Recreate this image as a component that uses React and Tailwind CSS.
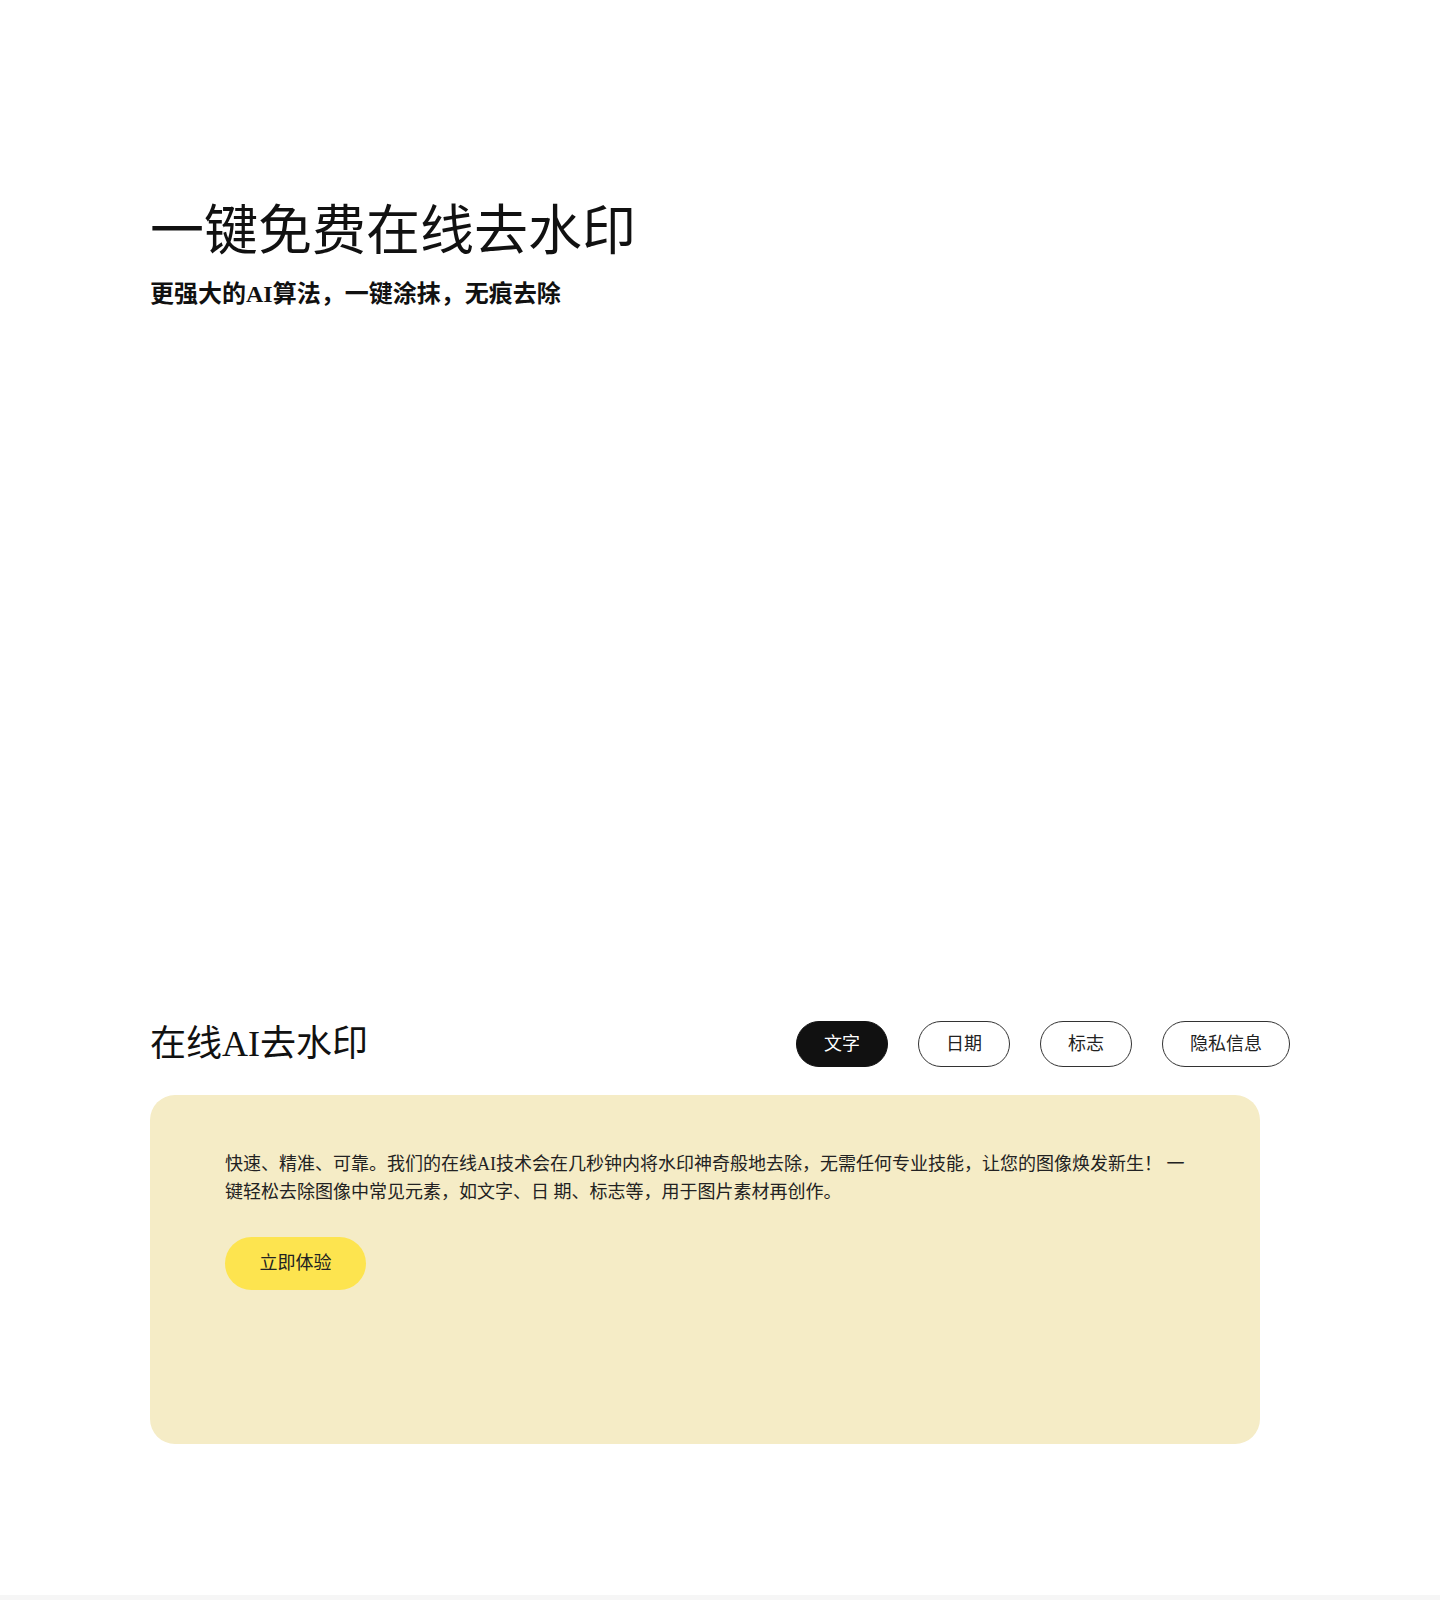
import React, {useState} from 'react';

const tags = ['文字', '日期', '标志', '隐私信息'];

const fontStack = {fontFamily: '"Liberation Serif", "Noto Sans CJK SC", serif'};

const App = () => {
  const [active, setActive] = useState('文字');

  return (
    <div style={fontStack} className="w-full h-[1600px] overflow-hidden bg-white text-[#1a1a1a] flex flex-col">
      <div className="w-[1140px] mx-auto">
        {/* hero */}
        <section className="pt-[200px]">
          <h1 className="text-[54px] leading-[65px] font-normal text-[#111]">一键免费在线去水印</h1>
          <p className="mt-[13px] text-[24px] leading-[32px] font-bold text-[#111]">更强大的AI算法，一键涂抹，无痕去除</p>
        </section>

        {/* tool section */}
        <section className="mt-[711px]">
          <div className="flex items-center justify-between h-[46px]">
            <h2 className="text-[36px] leading-[46px] font-normal text-[#111]">在线AI去水印</h2>
            <div className="flex gap-[30px]">
              {tags.map(tag => (
                <button
                  key={tag}
                  onClick={() => setActive(tag)}
                  className={
                    active === tag
                      ? 'h-[46px] px-[27px] rounded-full border border-[#111] bg-[#111] text-white text-[18px] leading-none'
                      : 'h-[46px] px-[27px] rounded-full border border-[#333] bg-white text-[#222] text-[18px] leading-none'
                  }
                >
                  {tag}
                </button>
              ))}
            </div>
          </div>

          <div className="mt-[28px] w-[1110px] h-[349px] rounded-[25px] bg-[#f5ecc6] pt-[55px] pl-[75px] pr-[70px]">
            <p className="text-[18px] leading-[28px] text-[#222]">
              快速、精准、可靠。我们的在线AI技术会在几秒钟内将水印神奇般地去除，无需任何专业技能，让您的图像焕发新生！ 一键轻松去除图像中常见元素，如文字、日 期、标志等，用于图片素材再创作。
            </p>
            <button className="mt-[31px] w-[141px] h-[53px] rounded-full bg-[#fde44f] text-[18px] text-[#222]">
              立即体验
            </button>
          </div>
        </section>
      </div>
      <div className="mt-auto h-[5px] bg-[#f6f6f6]" />
    </div>
  );
};

export default App;
